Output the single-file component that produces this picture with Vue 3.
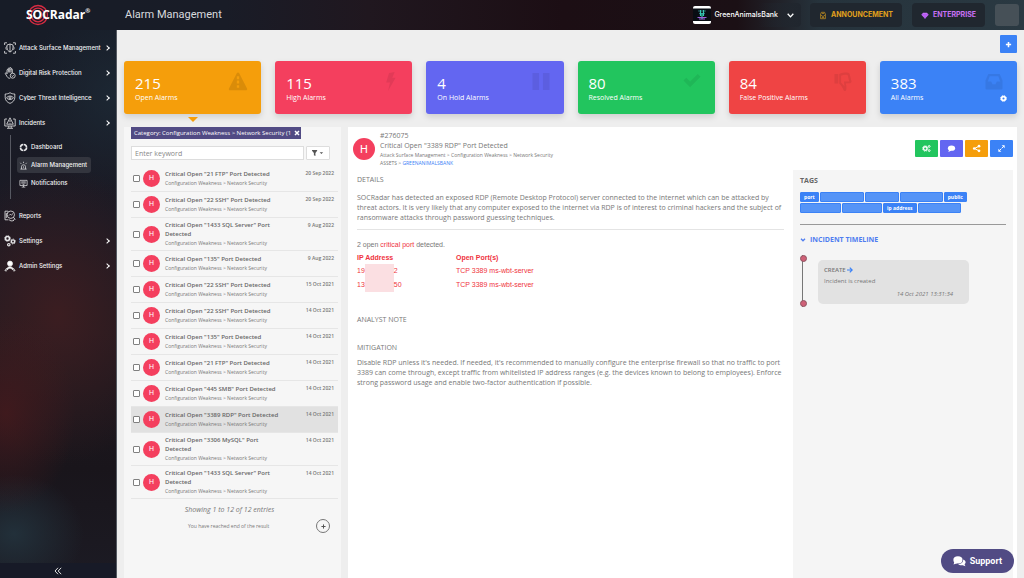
<script setup>
import { ref } from 'vue'

const stats = [
  { value: 215, label: 'Open Alarms', tone: 'amber', icon: 'warning', active: true },
  { value: 115, label: 'High Alarms', tone: 'rose', icon: 'bolt' },
  { value: 4, label: 'On Hold Alarms', tone: 'indigo', icon: 'pause' },
  { value: 80, label: 'Resolved Alarms', tone: 'green', icon: 'check' },
  { value: 84, label: 'False Positive Alarms', tone: 'red', icon: 'thumb' },
  { value: 383, label: 'All Alarms', tone: 'blue', icon: 'inbox', settings: true }
]

const alarms = ref([
  { title: 'Critical Open "21 FTP" Port Detected', date: '20 Sep 2022' },
  { title: 'Critical Open "22 SSH" Port Detected', date: '20 Sep 2022' },
  { title: 'Critical Open "1433 SQL Server" Port Detected', date: '9 Aug 2022' },
  { title: 'Critical Open "135" Port Detected', date: '9 Aug 2022' },
  { title: 'Critical Open "22 SSH" Port Detected', date: '15 Oct 2021' },
  { title: 'Critical Open "22 SSH" Port Detected', date: '14 Oct 2021' },
  { title: 'Critical Open "135" Port Detected', date: '14 Oct 2021' },
  { title: 'Critical Open "21 FTP" Port Detected', date: '14 Oct 2021' },
  { title: 'Critical Open "445 SMB" Port Detected', date: '14 Oct 2021' },
  { title: 'Critical Open "3389 RDP" Port Detected', date: '14 Oct 2021', selected: true },
  { title: 'Critical Open "3306 MySQL" Port Detected', date: '14 Oct 2021' },
  { title: 'Critical Open "1433 SQL Server" Port Detected', date: '14 Oct 2021' }
])

const hosts = [
  { head: '19', tail: '2', port: 'TCP 3389 ms-wbt-server' },
  { head: '13', tail: '50', port: 'TCP 3389 ms-wbt-server' }
]

const tagRows = [
  [{ text: 'port' }, { width: 44 }, { width: 34 }, { width: 43 }, { text: 'public' }],
  [{ width: 41 }, { width: 40 }, { text: 'ip address' }, { width: 43 }]
]
</script>

<template>
  <div class="app">
    <header class="topbar">
      <a class="logo" href="#" aria-label="SOCRadar">
        <svg class="rings" viewBox="0 0 22 22" aria-hidden="true">
          <circle cx="11" cy="11" r="9.5" /><circle cx="11" cy="11" r="6.8" /><circle cx="11" cy="11" r="4" />
        </svg>
        <span class="logo-text">SOCRadar</span><sup>®</sup>
      </a>
      <h1>Alarm Management</h1>
      <button class="company" type="button">
        <svg class="company-logo" viewBox="0 0 18 18" aria-hidden="true">
          <rect width="18" height="18" rx="2" fill="#fff" /><rect y="2.5" width="18" height="12.5" fill="#080d13" />
          <path d="M5 5h8M6 7.500h6" stroke="#286d70" stroke-width="1" />
          <path d="M7.500 4v6M10.500 4v6M9 7v6" stroke="#35c9b4" stroke-width="1.200" />
          <path d="M4.500 11.500h9M6 13h6" stroke="#9b62dc" stroke-width="1.200" />
        </svg>
        <span>GreenAnimalsBank</span>
        <svg class="chev" viewBox="0 0 8 8"><path d="M1.500 2.500L4 5.200l2.500-2.700" /></svg>
      </button>
      <button class="pill announcement" type="button">
        <svg viewBox="0 0 10 10"><path d="M2 3.500L3 1h4l1 2.500V9H2zM2 4l3 2.500L8 4M3.500 7.500h3M3.800 2.500h2.400" fill="none" stroke="currentColor" stroke-width=".8" /></svg>
        ANNOUNCEMENT
      </button>
      <button class="pill enterprise" type="button">
        <svg viewBox="0 0 10 10"><path d="M2.500 1.500h5L9.500 4 5 9 .5 4z" fill="#c66cfa" /><path d="M.5 4h9M3.500 4L5 9l1.500-5" stroke="#9a45dd" stroke-width=".5" fill="none" /></svg>
        ENTERPRISE
      </button>
      <button class="user" type="button" aria-label="Account"></button>
    </header>

    <aside class="sidebar">
      <nav>
        <a class="item" href="#">
          <svg viewBox="0 0 12 12"><path d="M.6 3V.8H3M9 .8h2.400V3M.6 9v2.200H3M9 11.200h2.400V9M6 2l3 1v2.500C9 8 7.500 9.400 6 10 4.500 9.400 3 8 3 5.500V3zM6 2v8M2.500 4.500C1.500 6 2 7 2.500 7.800M9.500 4.500c1 1.500.5 2.500 0 3.300" /></svg>
          <span>Attack Surface Management</span><i class="arrow"></i>
        </a>
        <a class="item" href="#">
          <svg viewBox="0 0 12 12"><path d="M3 7V3.200c0-1 1.300-1 1.300 0V1.600c0-1 1.400-1 1.400 0v-.4c0-1 1.300-1 1.300 0v1.200c0-1 1.300-1 1.300 0V6M4.300 3v2.500M5.700 2v3.500M7 2v3.500M3 6.500c-.8-1.200-2-.8-1.600.3l1.800 3C4 11 5 11.300 6.200 11.300" /><circle cx="8.700" cy="8.700" r="2.500" /><path d="M7.700 8.700l.8.800 1.200-1.400" /></svg>
          <span>Digital Risk Protection</span><i class="arrow"></i>
        </a>
        <a class="item" href="#">
          <svg viewBox="0 0 12 12"><path d="M6 .7c1.500 1 3 1.300 4.800 1.300v3.500C10.800 8.500 8.500 10.500 6 11.400 3.500 10.500 1.200 8.500 1.200 5.500V2C3 2 4.500 1.700 6 .7zM2.500 5.800C4 3.500 8 3.500 9.500 5.800 8 8 4 8 2.500 5.800z" /><circle cx="6" cy="5.800" r="1" /></svg>
          <span>Cyber Threat Intelligence</span><i class="arrow"></i>
        </a>
        <a class="item" href="#">
          <svg viewBox="0 0 12 12"><path d="M3 2H.8v7h10.400V2H9M6 .8l3.300 6.400H2.700zM6 3v2.200M6 6v.6M4.800 9v2M7.200 9v2M3 11.300h6" /></svg>
          <span>Incidents</span><i class="arrow"></i>
        </a>
        <div class="sub">
          <a href="#"><svg viewBox="0 0 10 10"><circle cx="5" cy="5" r="3.400" stroke-width="1.800" stroke-dasharray="4.600 .7" /></svg>Dashboard</a>
          <a class="current" href="#" aria-current="page"><svg viewBox="0 0 10 10"><path d="M1.500 9h7M2.800 9V6.200c0-2.600 4.400-2.600 4.400 0V9M5 .8v1.500M1.500 2l1 1.200M8.500 2l-1 1.200M5 6v1.500" /></svg>Alarm Management</a>
          <a href="#"><svg viewBox="0 0 10 10"><path d="M1 1.500h8v5.700H1zM5 7.200V9M3 9h4M2.500 3.200h5M2.500 4.500h5M4 6h2" /></svg>Notifications</a>
        </div>
        <a class="item" href="#">
          <svg viewBox="0 0 12 12"><path d="M4 1.200H1v8.600h3.500M2.300 3v5" /><circle cx="6.800" cy="4.700" r="3.700" /><path d="M5 5.500l1.300-1.300 1 1L9 3.500M5 9.500c1 1.500 3 1.800 4.500 1M9.500 7.300l1.800 2.200M9 11l1.500-2" /></svg>
          <span>Reports</span>
        </a>
        <a class="item" href="#">
          <svg viewBox="0 0 12 12"><circle cx="3.500" cy="3.500" r="2" stroke-width="1.600" /><circle cx="3.500" cy="3.500" r="3" stroke-dasharray="1 1.350" /><circle cx="9" cy="6.500" r="1.600" stroke-width="1.300" /><circle cx="9" cy="6.500" r="2.500" stroke-dasharray=".9 1.060" /><circle cx="4.800" cy="9.700" r="1.200" stroke-width="1.200" /></svg>
          <span>Settings</span><i class="arrow"></i>
        </a>
        <a class="item" href="#">
          <svg viewBox="0 0 12 12"><circle cx="6" cy="3.600" r="2.500" fill="#fff" /><path d="M2.800 9.500C3 5.800 9 5.800 9.200 9.500L6 8z" fill="#fff" /><path d="M.8 11l1.500-2.500L4 10M11.200 11L9.700 8.500 8 10M1 10.800h2M9 10.800h2" /></svg>
          <span>Admin Settings</span><i class="arrow"></i>
        </a>
      </nav>
      <button class="collapse" type="button" aria-label="Collapse menu">
        <svg viewBox="0 0 8 8"><path d="M4 .8L1 4l3 3.200M7.200.8l-3 3.200 3 3.200" /></svg>
      </button>
    </aside>

    <main>
      <div class="toolbar">
        <button type="button" aria-label="Add"><svg viewBox="0 0 8 8"><path d="M4 1v6M1 4h6" stroke="#fff" stroke-width="1.800" /></svg></button>
      </div>

      <section class="stats">
        <article v-for="s in stats" :key="s.label" class="stat" :class="[s.tone, { active: s.active }]">
          <strong>{{ s.value }}</strong>
          <span>{{ s.label }}</span>
          <svg class="glyph" viewBox="0 0 20 20" aria-hidden="true">
            <path v-if="s.icon === 'warning'" fill-rule="evenodd" d="M10 .5c.6 0 1 .3 1.300.8l8.200 16c.5 1-.1 2-1.200 2H1.700c-1.100 0-1.700-1-1.200-2l8.200-16c.3-.5.7-.8 1.300-.8zM8.800 4.500v3h2.400v-3zM8.800 9v3h2.400V9zM8.800 14v2.500h2.400V14z" />
            <path v-else-if="s.icon === 'bolt'" d="M10 1l6-1-2.500 6H17L9 20l2-9H7z" />
            <path v-else-if="s.icon === 'pause'" d="M1 1h7v18H1zM12 1h7v18h-7z" />
            <path v-else-if="s.icon === 'check'" d="M1 9l3-3 4 4 8-8 3 3L8 16z" />
            <path v-else-if="s.icon === 'thumb'" fill-rule="evenodd" d="M1 2h4v10H1zM6 2c5-2 10-2 11 0l2 8c0 2-2 2-6 2 1 4 1 8-1 8-2 0-1-3-6-8zM8 4v7l3.500 4c0-2-.5-3-.5-5h5.500L15 3.500C13 2.500 10 3 8 4z" />
            <path v-else fill-rule="evenodd" d="M4 2h12l3 7v8c0 1-.5 1.500-1.500 1.500h-15C1.500 18.500 1 18 1 17V9zM5.500 4.500L3.500 10H7l1.500 3h3l1.500-3h3.500l-2-5.500z" />
          </svg>
          <button v-if="s.settings" class="gear" type="button" aria-label="Configure">
            <svg viewBox="0 0 8 8"><circle cx="4" cy="4" r="2.200" fill="none" stroke="#fff" stroke-width="2" /><circle cx="4" cy="4" r="3.300" fill="none" stroke="#fff" stroke-dasharray="1.600 .99" /></svg>
          </button>
        </article>
      </section>

      <div class="content">
        <section class="list-panel">
          <div class="chip"><span>Category: Configuration Weakness &gt; Network Security (1</span><button type="button" aria-label="Remove filter"><svg viewBox="0 0 6 6"><path d="M1 1l4 4M5 1L1 5" stroke="#fff" stroke-width="1.500" /></svg></button></div>
          <div class="search">
            <input type="text" placeholder="Enter keyword" aria-label="Enter keyword" />
            <button type="button" aria-label="Filter"><svg viewBox="0 0 14 7"><path d="M0 0h6v1L4 3.500V7L2.200 6V3.500L0 1z" /><path d="M9 2.500h4L11 4.800z" /></svg></button>
          </div>
          <ul>
            <li v-for="(a, i) in alarms" :key="i" :class="{ selected: a.selected }">
              <input v-model="a.checked" type="checkbox" :aria-label="a.title" />
              <span class="badge">H</span>
              <div class="alarm"><b>{{ a.title }}</b><small>Configuration Weakness &gt; Network Security</small></div>
              <time>{{ a.date }}</time>
            </li>
          </ul>
          <p class="count">Showing 1 to 12 of 12 entries</p>
          <div class="end"><span>You have reached end of the result</span><button type="button" aria-label="Load more"><svg viewBox="0 0 6 6"><path d="M3 .5v5M.5 3h5" stroke="#555" stroke-width="1.200" /></svg></button></div>
        </section>

        <section class="detail">
          <div class="detail-head">
            <span class="badge large">H</span>
            <div class="heading">
              <p>#276075</p>
              <h2>Critical Open "3389 RDP" Port Detected</h2>
              <p class="crumb">Attack Surface Management &gt; Configuration Weakness &gt; Network Security</p>
              <p class="crumb">ASSETS &gt; <a href="#">GREENANIMALSBANK</a></p>
            </div>
            <div class="actions">
              <button class="green" type="button" aria-label="Process"><svg viewBox="0 0 10 10"><circle cx="3.600" cy="5" r="2" fill="none" stroke="#fff" stroke-width="1.500" /><circle cx="3.600" cy="5" r="3" fill="none" stroke="#fff" stroke-dasharray="1.300 1.050" /><circle cx="8" cy="2.700" r="1" fill="none" stroke="#fff" stroke-width="1.100" /><circle cx="8" cy="7.300" r="1" fill="none" stroke="#fff" stroke-width="1.100" /></svg></button>
              <button class="indigo" type="button" aria-label="Comment"><svg viewBox="0 0 10 10"><ellipse cx="5" cy="4.600" rx="4" ry="3" fill="#fff" /><path d="M2.500 6L1.500 8.800 5 7.300z" fill="#fff" /></svg></button>
              <button class="amber" type="button" aria-label="Share"><svg viewBox="0 0 10 10"><path d="M8 2.300L2.800 5 8 7.700" fill="none" stroke="#fff" stroke-width="1.100" /><circle cx="7.800" cy="2.400" r="1.500" fill="#fff" /><circle cx="2.500" cy="5" r="1.500" fill="#fff" /><circle cx="7.800" cy="7.600" r="1.500" fill="#fff" /></svg></button>
              <button class="blue" type="button" aria-label="Expand"><svg viewBox="0 0 10 10"><path d="M5.200 1.500h3.300v3.300zM1.500 5.200v3.300h3.300z" fill="#fff" /><path d="M2.500 7.500l5-5" stroke="#fff" stroke-width="1.100" stroke-dasharray="3 .8" /></svg></button>
            </div>
          </div>

          <div class="detail-body">
            <div class="report">
              <h3>DETAILS</h3>
              <p class="summary">SOCRadar has detected an exposed RDP (Remote Desktop Protocol) server connected to the internet which can be attacked by threat actors. It is very likely that any computer exposed to the internet via RDP is of interest to criminal hackers and the subject of ransomware attacks through password guessing techniques.</p>
              <hr />
              <p class="found">2 open <em>critical port</em> detected.</p>
              <table>
                <thead><tr><th>IP Address</th><th>Open Port(s)</th></tr></thead>
                <tbody>
                  <tr v-for="h in hosts" :key="h.head"><td><div class="ip">{{ h.head }}<i></i>{{ h.tail }}</div></td><td>{{ h.port }}</td></tr>
                </tbody>
              </table>
              <h3 class="note">ANALYST NOTE</h3>
              <h3 class="mitigation">MITIGATION</h3>
              <p>Disable RDP unless it's needed. If needed, it's recommended to manually configure the enterprise firewall so that no traffic to port 3389 can come through, except traffic from whitelisted IP address ranges (e.g. the devices known to belong to employees). Enforce strong password usage and enable two-factor authentication if possible.</p>
            </div>
            <aside class="side">
              <h4>TAGS</h4>
              <div class="tags">
                <div v-for="(row, r) in tagRows" :key="r" class="tag-row">
                  <span v-for="(t, i) in row" :key="i" class="tag" :class="{ masked: !t.text }" :style="t.width ? { width: t.width + 'px' } : null">{{ t.text }}</span>
                </div>
              </div>
              <hr />
              <button class="toggle" type="button"><svg viewBox="0 0 6 6"><path d="M1 1.800l2 2 2-2" fill="none" stroke="currentColor" stroke-width="1.300" /></svg>INCIDENT TIMELINE</button>
              <div class="timeline">
                <div class="rail"></div>
                <article>
                  <b>CREATE <svg viewBox="0 0 6 6"><path d="M0 3h5M2.800.6L5.200 3 2.800 5.400" fill="none" stroke="#3b82f6" stroke-width="1.200" /></svg></b>
                  <p>Incident is created</p>
                  <time>14 Oct 2021 13:31:34</time>
                </article>
              </div>
            </aside>
          </div>
        </section>
      </div>
    </main>

    <button class="support" type="button">
      <svg viewBox="0 0 14 12"><ellipse cx="5.300" cy="4.300" rx="5" ry="3.900" fill="#fff" /><path d="M1.500 6L.5 9.300 4.500 8z" fill="#fff" /><path d="M11 3.800c3 1 3.500 3.700 1.500 5.200l1 2.200-3-1.200c-2 .4-4-.1-5-1.300C9 8.700 11.300 6.800 11 3.800z" fill="#fff" /></svg>
      Support
    </button>
  </div>
</template>

<style>
body { background: #eee; }
</style>

<style scoped>
* { box-sizing: border-box; margin: 0; padding: 0; }
.app {
  display: grid;
  grid-template: 30px 1fr / 117px minmax(0, 1fr);
  min-height: 100vh;
  background: #eee;
  color: #777;
  font: 7px/10px "Open Sans", "Noto Sans", sans-serif;
}
button { border: 0; background: none; font: inherit; color: inherit; cursor: pointer; display: flex; align-items: center; justify-content: center; }
a { color: inherit; text-decoration: none; }
svg { display: block; flex: none; }
.amber { background: #f59e0b; }
.rose { background: #f43f5e; }
.indigo { background: #6366f1; }
.green { background: #22c55e; }
.red { background: #ef4444; }
.blue { background: #3b82f6; }

.topbar {
  grid-column: 1 / -1;
  display: flex;
  align-items: center;
  padding-right: 5px;
  color: #fff;
  background: linear-gradient(90deg, #171c27 0%, #191c27 22%, #20171f 36%, #1c0e14 55%, #1b1015 72%, #26333c 80%, #2a3942 100%);
  font-family: Inter, sans-serif;
}
.logo { position: relative; width: 117px; padding-left: 26px; display: flex; align-items: center; font: 700 12px/28px "Open Sans", sans-serif; }
.logo-text { position: relative; }
.logo sup { font-size: 6px; line-height: 6px; align-self: flex-start; padding-top: 7px; }
.rings { position: absolute; left: 27px; top: 3px; width: 22px; height: 22px; fill: none; stroke: #d82c43; stroke-width: 1.300; }
h1 { flex: 1; padding-left: 8px; font: 400 11px/28px Roboto, sans-serif; color: #d8dade; }
.company { gap: 3px; height: 24px; padding: 0 6px 0 0; margin-right: 9px; border-radius: 4px; background: linear-gradient(90deg, transparent 60%, #20262e); font-size: 7px; font-weight: 500; }
.company-logo { width: 18px; height: 18px; }
.chev { width: 9px; height: 9px; margin-left: 5px; fill: none; stroke: #fff; stroke-width: 1.200; }
.pill { height: 24px; gap: 4px; padding: 0 9px; margin-right: 10px; border-radius: 4px; background: #20272f; font: 700 7px/10px Inter, sans-serif; }
.pill svg { width: 8px; height: 9px; }
.announcement { color: #e0a11c; }
.enterprise { color: #c870f5; }
.user { width: 24px; height: 22px; border-radius: 3px; background: #465057; }

.sidebar {
  display: flex;
  flex-direction: column;
  justify-content: space-between;
  color: #f2f2f4;
  font: 500 6px/10px Inter, sans-serif;
  border-right: 1px solid #555a62;
  background:
    radial-gradient(ellipse 70px 100px at 5% 70%, #461a1dcc, transparent),
    radial-gradient(ellipse 120px 150px at 50% 52%, #421e21cc, transparent),
    radial-gradient(ellipse 70px 60px at 12% 92%, #22303a, transparent),
    radial-gradient(ellipse 90px 100px at 100% 12%, #1c2733, transparent),
    linear-gradient(#171c27, #1b1a24 35%, #201a20 55%, #19151b 80%, #1c1b24);
}
nav { padding-top: 5px; }
.item { display: flex; align-items: center; height: 25px; padding: 0 7px 0 4px; gap: 3px; }
.item svg, .sub svg { fill: none; stroke: #e8e8ea; stroke-width: .8; }
.item svg { width: 12px; height: 12px; }
.item span { flex: 1; white-space: nowrap; }
.arrow { width: 4px; height: 4px; border: solid #fff; border-width: 1px 1px 0 0; transform: rotate(45deg); }
.sub { margin: 0 0 4px 10px; padding: 3px 0 7px 6px; border-left: 1px solid #565861; display: flex; flex-direction: column; align-items: flex-start; }
.sub a { display: flex; align-items: center; gap: 3px; height: 16px; margin: 1px 0; padding: 0 4px 0 2px; border-radius: 3px; }
.sub svg { width: 9px; height: 9px; }
.sub .current { background: #33353e; }
.collapse { height: 15px; width: 100%; background: #171a27; }
.collapse svg { width: 8px; height: 8px; fill: none; stroke: #ddd; }

main { padding: 0 7px; display: flex; flex-direction: column; min-width: 0; }
.toolbar { height: 31px; padding-top: 5px; display: flex; justify-content: flex-end; align-items: flex-start; }
.toolbar button { width: 17px; height: 18px; background: #3b82f6; border-radius: 1px; }
.toolbar svg { width: 7px; height: 7px; }
.stats { display: grid; grid-template-columns: repeat(6, minmax(0, 1fr)); gap: 14px; }
.stat { position: relative; height: 53px; padding: 12px 11px 0; border-radius: 3px; color: #fff; box-shadow: 0 3px 6px #0002; display: flex; flex-direction: column; }
.stat strong { font-size: 15px; line-height: 20px; font-weight: 400; }
.stat.active::after { content: ""; position: absolute; top: 56px; left: 50%; margin-left: -5px; border: 5px solid transparent; border-top-color: #f59e0b; border-bottom: 0; }
.glyph { position: absolute; right: 13px; top: 11px; width: 20px; height: 19px; fill: #00000012; }
.active .glyph { fill: #0000001c; }
.gear { position: absolute; right: 10px; bottom: 12px; }
.gear svg { width: 7px; height: 7px; }

.content { flex: 1; display: grid; grid-template-columns: 217px minmax(0, 1fr); gap: 7px; margin-top: 13px; }
.list-panel { background: #f6f6f6; padding: 0 3px 0 7px; min-width: 0; }
.chip { display: inline-flex; vertical-align: top; align-items: center; gap: 3px; height: 12px; padding: 0 1px 0 3px; background: #514b84; color: #fff; font-size: 6px; }
.chip svg { width: 6px; height: 6px; }
.search { display: flex; gap: 2px; padding: 7px 8px 6px 0; }
.search input { flex: 1; min-width: 0; height: 14px; padding: 0 3px; border: 1px solid #ddd; background: #fff; font: inherit; color: #777; outline: 0; }
.search input::placeholder { color: #888; opacity: 1; }
.search button { width: 24px; border: 1px solid #ddd; background: #fff; border-radius: 1px; }
.search button svg { width: 14px; height: 6px; fill: #555; }
ul { list-style: none; }
li { display: flex; align-items: center; min-height: 26px; padding: 3px 4px 3px 2px; border-bottom: 1px solid #e6e6e6; }
li.selected { background: #e1e1e1; }
li input { appearance: none; width: 7px; height: 7px; border: 1px solid #808080; border-radius: 1px; background: #fff; }
li input:checked { background: #3b82f6; }
.badge { flex: none; width: 17px; height: 17px; margin: 0 5px 0 3px; border-radius: 50%; background: #f43f5e; color: #fff; display: grid; place-items: center; font: 400 7px/7px Roboto, sans-serif; }
.alarm { flex: 1; min-width: 0; display: flex; flex-direction: column; line-height: 9px; font-size: 6px; padding-right: 20px; }
.alarm b { font-weight: 600; color: #666; }
.alarm small { font-size: 5px; line-height: 8px; white-space: nowrap; }
li time { align-self: flex-start; font-size: 5px; line-height: 8px; font-weight: 600; white-space: nowrap; }
.count { margin-top: 6px; text-align: center; font-style: italic; padding-right: 10px; }
.end { display: flex; align-items: center; padding: 4px 8px 0 57px; font-size: 5px; justify-content: space-between; }
.end button { width: 14px; height: 14px; border: 1px solid #777; border-radius: 50%; }
.end svg { width: 5px; height: 5px; }

.detail { background: #fff; padding: 4px 4px 0 5px; display: flex; flex-direction: column; min-width: 0; }
.detail-head { display: flex; align-items: flex-start; height: 39px; }
.badge.large { width: 22px; height: 22px; margin: 7px 5px 0 0; font-size: 11px; line-height: 11px; }
.heading { flex: 1; }
h2 { font-size: 7px; line-height: 10px; font-weight: 400; }
.heading .crumb { font-size: 5px; line-height: 8px; }
.crumb a { color: #3b82f6; }
.actions { display: flex; gap: 2px; margin-top: 9px; }
.actions button { width: 23px; height: 17px; border-radius: 1px; }
.actions svg { width: 9px; height: 9px; }
.detail-body { flex: 1; display: grid; grid-template-columns: minmax(0, 1fr) 220px; gap: 9px; }
.report { padding: 5px 0 0 4px; }
h3 { font-size: 7px; line-height: 10px; font-weight: 400; }
.summary { margin-top: 8px; }
.report hr { border: 0; border-top: 1px solid #e4e4e4; margin: 6px 0 10px; }
.found, table { font-family: "Liberation Sans", Arial, sans-serif; }
em, table { color: #ef3340; font-style: normal; }
table { border-collapse: collapse; margin-top: 2px; }
th { width: 99px; height: 12px; text-align: left; }
td { height: 14px; }
td:last-child, th:last-child { white-space: nowrap; }
.ip { display: flex; align-items: center; }
.ip i { width: 29px; height: 14px; background: #fbdfe2; }
.note { margin-top: 23px; }
.mitigation { margin: 18px 0 5px; }
.side { background: #f5f5f5; padding: 5px 7px; }
h4 { font-size: 7px; line-height: 12px; color: #666; }
.tags { display: grid; gap: 1px; margin-top: 5px; }
.tag-row { display: flex; gap: 1px; }
.tag { height: 10px; padding: 0 3px; border: 1px solid #3b82f6; border-radius: 1px; background: #3b82f6; color: #fff; font-size: 5px; line-height: 8px; font-weight: 700; white-space: nowrap; }
.masked { background: #5594f7; }
.side hr { border: 0; border-top: 1px solid #999; margin: 11px 0 10px; }
.toggle { gap: 4px; color: #4f7df0; font-weight: 700; font-size: 7px; line-height: 10px; }
.toggle svg { width: 6px; height: 6px; }
.timeline { display: flex; align-items: flex-start; gap: 15px; margin-top: 10px; }
.rail { position: relative; width: 1px; height: 52px; margin-left: 2px; background: #777; }
.rail::before, .rail::after { content: ""; position: absolute; left: -2px; width: 5px; height: 5px; border-radius: 50%; background: #cf6077; border: 1px solid #8e5561; }
.rail::before { top: 0; }
.rail::after { bottom: 0; }
.timeline article { flex: 0 1 151px; margin-top: 5px; padding: 5px 16px 3px 6px; border-radius: 5px; background: #e2e2e2; font-size: 6px; display: flex; flex-direction: column; }
.timeline b { display: flex; gap: 1px; align-items: center; font-weight: 600; }
.timeline b svg { width: 6px; height: 6px; }
.timeline p { line-height: 12px; }
.timeline time { align-self: flex-end; font-style: italic; line-height: 14px; }
.support { position: fixed; right: 10px; bottom: 5px; height: 24px; padding: 0 12px; gap: 4px; border-radius: 12px; background: #514b84; color: #fff; font: 700 9px/12px Roboto, sans-serif; }
.support svg { width: 13px; height: 11px; }
</style>
